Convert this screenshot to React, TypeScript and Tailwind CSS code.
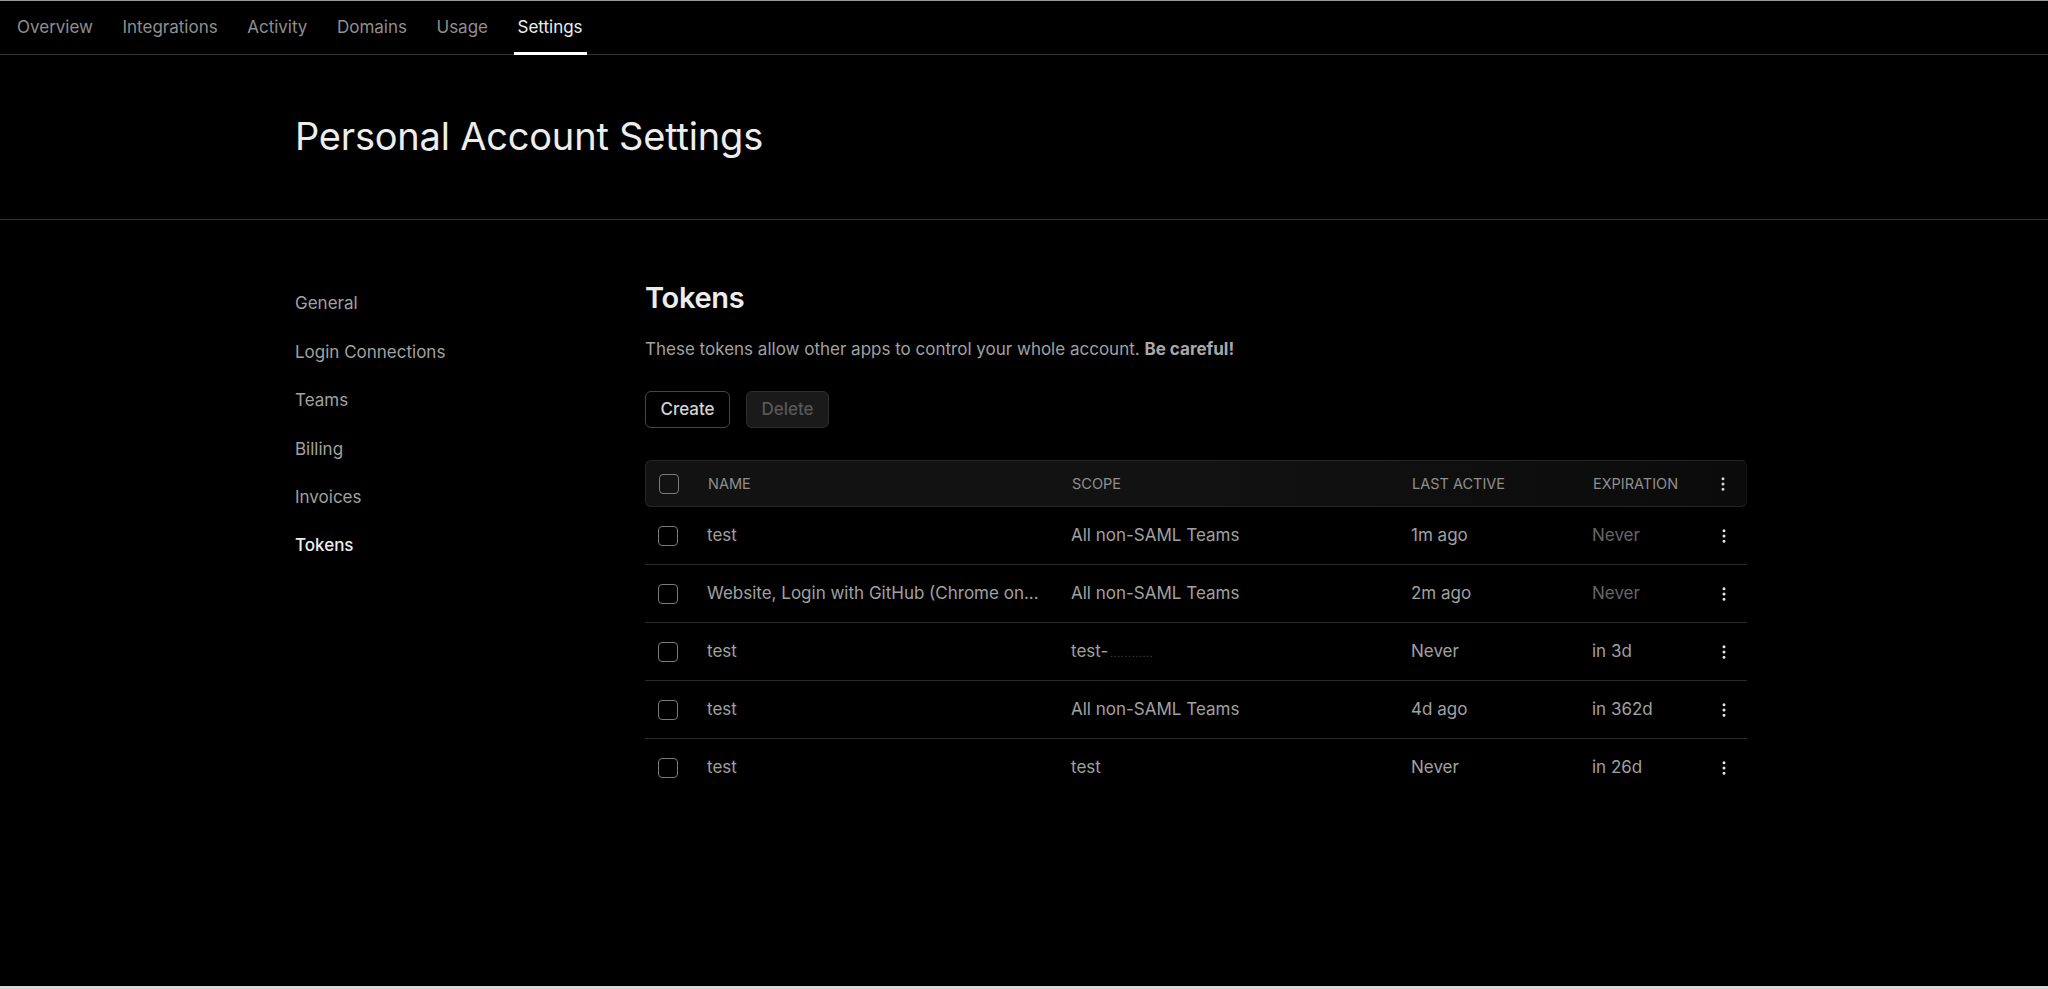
import { EllipsisVertical } from 'lucide-react';

const tabs = ['Overview', 'Integrations', 'Activity', 'Domains', 'Usage', 'Settings'];
const sideItems = ['General', 'Login Connections', 'Teams', 'Billing', 'Invoices', 'Tokens'];

type Token = {
  name: string;
  scope: string;
  redacted?: boolean;
  lastActive: string;
  expiration: string;
  dimExpiration?: boolean;
};

const tokens: Token[] = [
  { name: 'test', scope: 'All non-SAML Teams', lastActive: '1m ago', expiration: 'Never', dimExpiration: true },
  { name: 'Website, Login with GitHub (Chrome on...', scope: 'All non-SAML Teams', lastActive: '2m ago', expiration: 'Never', dimExpiration: true },
  { name: 'test', scope: 'test-', redacted: true, lastActive: 'Never', expiration: 'in 3d' },
  { name: 'test', scope: 'All non-SAML Teams', lastActive: '4d ago', expiration: 'in 362d' },
  { name: 'test', scope: 'test', lastActive: 'Never', expiration: 'in 26d' },
];

function Checkbox() {
  return <div className="w-[20px] h-[20px] rounded-[4px] border-[1.5px] border-[#7a7a7a]" />;
}

const cols = 'grid grid-cols-[62px_364px_340px_181px_1fr_47px] items-center';

export default function App() {
  return (
    <div className="w-full h-[989px] bg-black flex flex-col border-t border-[#9a9a9a] font-['Inter',sans-serif] antialiased">
      <nav className="h-[54px] shrink-0 border-b border-[#333] flex items-stretch gap-[29.5px] pl-[17px]">
        {tabs.map((t) => (
          <div
            key={t}
            className={
              t === 'Settings'
                ? 'relative flex items-center text-[17px] text-[#ededed]'
                : 'flex items-center text-[17px] text-[#8f8f8f]'
            }
          >
            {t}
            {t === 'Settings' && (
              <div className="absolute -left-[4px] -right-[4px] -bottom-px h-[3px] bg-white" />
            )}
          </div>
        ))}
      </nav>

      <header className="h-[165px] shrink-0 border-b border-[#333]">
        <div className="w-[1458px] mx-auto h-full flex items-center">
          <h1 className="text-[38px] text-[#ededed] tracking-[-0.2px] pb-[1px]">Personal Account Settings</h1>
        </div>
      </header>

      <main className="w-[1458px] mx-auto flex pt-[60px] flex-1">
        <aside className="w-[350px] shrink-0 flex flex-col">
          {sideItems.map((s) => (
            <div
              key={s}
              className={
                s === 'Tokens'
                  ? 'h-[48.4px] flex items-center text-[17px] font-medium text-[#ededed]'
                  : 'h-[48.4px] flex items-center text-[17px] text-[#a1a1a1]'
              }
            >
              {s}
            </div>
          ))}
        </aside>

        <section className="w-[1102px] flex flex-col">
          <h2 className="text-[29px] leading-[36px] font-semibold text-[#ededed] tracking-[-0.3px]">Tokens</h2>
          <p className="mt-[20px] text-[17px] leading-[26px] text-[#a1a1a1]">
            These tokens allow other apps to control your whole account. <b className="font-bold text-[#a8a8a8]">Be careful!</b>
          </p>
          <div className="mt-[29px] flex gap-[16px]">
            <button className="h-[37px] w-[85px] rounded-[6px] border border-[#454545] bg-black text-[17px] font-medium text-[#d4d4d4]">
              Create
            </button>
            <button className="h-[37px] w-[83px] rounded-[6px] border border-[#2e2e2e] bg-[#1a1a1a] text-[17px] font-medium text-[#575757]">
              Delete
            </button>
          </div>

          <div className="mt-[32px]">
            <div className={`${cols} h-[47px] rounded-[6px] border border-[#262626] border-r-[#161616] bg-gradient-to-r from-[#121212] via-[#121212] to-[#0b0b0b] text-[14.5px] text-[#8f8f8f]`}>
              <div className="pl-[13px]"><Checkbox /></div>
              <div>NAME</div>
              <div>SCOPE</div>
              <div>LAST ACTIVE</div>
              <div>EXPIRATION</div>
              <div className="flex justify-center">
                <EllipsisVertical className="w-[18px] h-[18px] text-[#d4d4d4]" />
              </div>
            </div>

            {tokens.map((tk, i) => (
              <div
                key={i}
                className={`${cols} h-[58px] text-[17px] text-[#a1a1a1] ${i < tokens.length - 1 ? 'border-b border-[#2a2a2a]' : ''}`}
              >
                <div className="pl-[13px]"><Checkbox /></div>
                <div className="truncate pr-4">{tk.name}</div>
                <div className="flex items-baseline">
                  {tk.scope}
                  {tk.redacted && (
                    <span className="ml-[2px] text-[9px] tracking-[1px] text-[#4a4a4a]">............</span>
                  )}
                </div>
                <div>{tk.lastActive}</div>
                <div className={tk.dimExpiration ? 'text-[#666]' : ''}>{tk.expiration}</div>
                <div className="flex justify-center">
                  <EllipsisVertical className="w-[18px] h-[18px] text-[#e5e5e5]" />
                </div>
              </div>
            ))}
          </div>
        </section>
      </main>

      <div className="h-[3px] shrink-0 bg-[#d9d9d9]" />
    </div>
  );
}
